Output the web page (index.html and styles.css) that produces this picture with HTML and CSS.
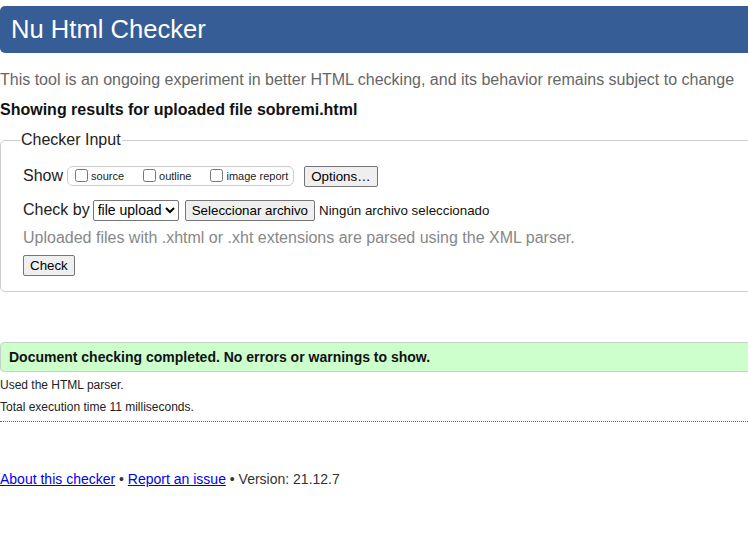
FILE: index.html
```html
<!DOCTYPE html>
<html lang="en">
<head>
<meta charset="utf-8">
<title>Showing results for uploaded file sobremi.html - Nu Html Checker</title>
<link rel="stylesheet" href="styles.css">
</head>
<body>
<h1 class="header">Nu Html Checker</h1>
<p class="intro">This tool is an ongoing experiment in better HTML checking, and its behavior remains subject to change</p>
<p class="showing">Showing results for uploaded file sobremi.html</p>
<fieldset class="input">
  <legend class="legend">Checker Input</legend>
  <div class="row show-row">
    <span class="lbl">Show</span>
    <span class="group">
      <label class="opt"><input type="checkbox" class="cb">source</label>
      <label class="opt"><input type="checkbox" class="cb">outline</label>
      <label class="opt"><input type="checkbox" class="cb">image report</label>
    </span>
    <button class="btn options">Options…</button>
  </div>
  <div class="row by-row">
    <span class="lbl">Check by</span>
    <select class="sel"><option>file upload</option></select>
    <button class="btn file">Seleccionar archivo</button>
    <span class="nofile">Ningún archivo seleccionado</span>
  </div>
  <p class="hint">Uploaded files with .xhtml or .xht extensions are parsed using the XML parser.</p>
  <button class="btn check">Check</button>
</fieldset>
<p class="success">Document checking completed. No errors or warnings to show.</p>
<p class="details first">Used the HTML parser.</p>
<p class="details">Total execution time 11 milliseconds.</p>
<hr class="sep">
<p class="footer"><a href="#">About this checker</a> • <a href="#">Report an issue</a> • Version: 21.12.7</p>
</body>
</html>
```
FILE: styles.css
```css
html, body {
  overflow-x: hidden;
}
body {
  margin: 0;
  font-family: "Liberation Sans", Arial, sans-serif;
  color: #000;
  background: #fff;
}
.header {
  margin: 6px -20px 0 0;
  height: 47px;
  line-height: 47px;
  padding: 0 0 0 11px;
  background: #365d95;
  color: #fff;
  font-size: 25.6px;
  font-weight: normal;
  border-radius: 5px;
}
.intro {
  margin: 17px 0 0 0;
  font-size: 16px;
  line-height: 20px;
  color: #666;
  white-space: nowrap;
}
.showing {
  margin: 10px 0 0 0;
  font-size: 16px;
  line-height: 20px;
  font-weight: bold;
  color: #111;
}
.input {
  margin: 11px -20px 0 0;
  padding: 4px 20px 15px 22px;
  border: 1px solid #ccc;
  border-radius: 5px;
}
.legend {
  font-size: 16px;
  padding: 0 1px;
  margin-left: -3px;
  color: #222;
}
.row {
  display: flex;
  align-items: center;
  height: 22px;
  font-size: 16px;
}
.show-row {
  margin-top: 12px;
}
.by-row {
  margin-top: 12px;
}
.lbl {
  color: #222;
}
.group {
  display: inline-flex;
  align-items: center;
  margin-left: 4px;
  height: 18px;
  padding: 0 5px 0 5px;
  border: 1px solid #ccc;
  border-radius: 6px;
  gap: 17px;
}
.opt {
  display: inline-flex;
  align-items: center;
  font-size: 11px;
  color: #222;
}
.cb {
  margin: 0 3px 2px 2px;
  width: 13px;
  height: 13px;
}
.btn {
  font-family: "Liberation Sans", Arial, sans-serif;
  font-size: 13.333px;
  color: #000;
  background: #efefef;
  border: 1px solid #767676;
  border-radius: 2px;
  padding: 0 6px;
  height: 21px;
}
.options {
  margin-left: 10px;
}
.sel {
  margin-left: 3px;
  font-family: "Liberation Sans", Arial, sans-serif;
  font-size: 14px;
  height: 21px;
  color: #000;
  background: #fff;
  border: 1px solid #767676;
  border-radius: 2px;
}
.file {
  margin-left: 6px;
}
.nofile {
  margin-left: 4px;
  font-size: 13.333px;
  color: #111;
}
.hint {
  margin: 7px 0 0 0;
  font-size: 16px;
  line-height: 20px;
  color: #888;
}
.check {
  margin-top: 7px;
  display: block;
}
.success {
  margin: 50px -20px 0 0;
  height: 28px;
  line-height: 28px;
  padding: 0 0 0 8px;
  background: #ccffcc;
  border: 1px solid #c4d4c4;
  border-radius: 4px;
  font-size: 14px;
  font-weight: bold;
  color: #111;
}
.details {
  margin: 7px 0 0 0;
  font-size: 12px;
  line-height: 15px;
  color: #222;
}
.details.first {
  margin-top: 6px;
}
.sep {
  margin: 6px 0 0 0;
  border: 0;
  border-top: 1px dotted #666;
  height: 0;
}
.footer {
  margin: 48px 0 0 0;
  font-size: 14px;
  line-height: 18px;
  color: #333;
}
.footer a {
  color: #0000ee;
}
```
